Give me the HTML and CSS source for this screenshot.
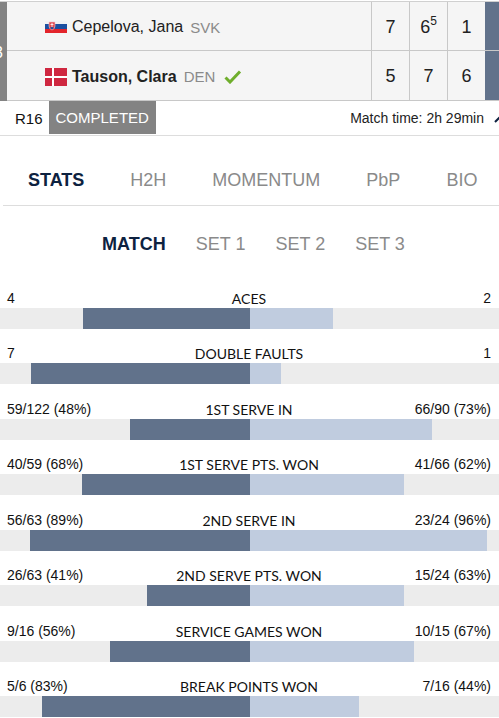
FILE: index.html
```html
<!DOCTYPE html>
<html lang="en">
<head>
    <meta charset="UTF-8">
    <meta name="viewport" content="width=device-width, initial-scale=1.0">
    <title>Cepelova vs Tauson - Match Stats</title>
    <link rel="stylesheet" href="styles.css">
</head>
<body>
    <header class="scoreboard">
        <div class="match-no"><span>3</span></div>
        <table class="score-table">
            <tr>
                <td class="player">
                    <div class="player-info">
                        <svg class="flag" viewBox="0 0 22 18" aria-hidden="true">
                            <rect y="3" width="22" height="4" fill="#f1f1f4"/>
                            <rect y="6" width="22" height="5" fill="#1c4fa0"/>
                            <rect y="11" width="22" height="4" fill="#e3242b"/>
                            <path d="M4 4h6v4q0 3-3 4-3-1-3-4z" fill="#e0474f" stroke="#f3c8cc" stroke-width=".6"/>
                            <path d="M7 5v4M5.5 6.5h3" stroke="#fff" stroke-width=".8"/>
                            <path d="M5 10q2-2 4 0l-2 1.5z" fill="#1c4fa0"/>
                        </svg>
                        <span class="name">Cepelova, Jana</span>
                        <span class="country">SVK</span>
                    </div>
                </td>
                <td class="set">7</td>
                <td class="set">6<sup>5</sup></td>
                <td class="set">1</td>
                <td class="points"></td>
            </tr>
            <tr class="winner">
                <td class="player">
                    <div class="player-info">
                        <svg class="flag" viewBox="0 0 22 18" aria-hidden="true">
                            <rect width="22" height="18" fill="#cf2740"/>
                            <path d="M8 0v18M0 9h22" stroke="#fff" stroke-width="2"/>
                        </svg>
                        <span class="name">Tauson, Clara</span>
                        <span class="country">DEN</span>
                        <svg class="check" viewBox="0 0 18 14" aria-hidden="true">
                            <path d="M1.5 7.5L6 12L16 1.5" fill="none" stroke="#6fae2c" stroke-width="3"/>
                        </svg>
                    </div>
                </td>
                <td class="set">5</td>
                <td class="set">7</td>
                <td class="set">6</td>
                <td class="points"></td>
            </tr>
        </table>
    </header>

    <div class="match-info">
        <span class="round">R16</span>
        <span class="state">COMPLETED</span>
        <span class="time">Match time: 2h 29min</span>
        <button class="toggle" aria-label="Collapse">
            <svg viewBox="0 0 16 10" aria-hidden="true">
                <path d="M1 9L8 2L15 9" fill="none" stroke="#0d2240" stroke-width="2"/>
            </svg>
        </button>
    </div>

    <nav class="tabs">
        <button class="active">STATS</button>
        <button>H2H</button>
        <button>MOMENTUM</button>
        <button>PbP</button>
        <button>BIO</button>
    </nav>
    <nav class="set-tabs">
        <button class="active">MATCH</button>
        <button>SET 1</button>
        <button>SET 2</button>
        <button>SET 3</button>
    </nav>

    <main class="stats">
        <section class="stat">
            <div class="labels"><span>4</span><h2>ACES</h2><span>2</span></div>
            <div class="bars">
                <div class="bar left"><div class="fill" style="width: 66.67%"></div></div>
                <div class="bar right"><div class="fill" style="width: 33.33%"></div></div>
            </div>
        </section>
        <section class="stat">
            <div class="labels"><span>7</span><h2>DOUBLE FAULTS</h2><span>1</span></div>
            <div class="bars">
                <div class="bar left"><div class="fill" style="width: 87.5%"></div></div>
                <div class="bar right"><div class="fill" style="width: 12.5%"></div></div>
            </div>
        </section>
        <section class="stat">
            <div class="labels"><span>59/122 (48%)</span><h2>1ST SERVE IN</h2><span>66/90 (73%)</span></div>
            <div class="bars">
                <div class="bar left"><div class="fill" style="width: 48%"></div></div>
                <div class="bar right"><div class="fill" style="width: 73%"></div></div>
            </div>
        </section>
        <section class="stat">
            <div class="labels"><span>40/59 (68%)</span><h2>1ST SERVE PTS. WON</h2><span>41/66 (62%)</span></div>
            <div class="bars">
                <div class="bar left"><div class="fill" style="width: 67%"></div></div>
                <div class="bar right"><div class="fill" style="width: 62%"></div></div>
            </div>
        </section>
        <section class="stat">
            <div class="labels"><span>56/63 (89%)</span><h2>2ND SERVE IN</h2><span>23/24 (96%)</span></div>
            <div class="bars">
                <div class="bar left"><div class="fill" style="width: 88%"></div></div>
                <div class="bar right"><div class="fill" style="width: 95%"></div></div>
            </div>
        </section>
        <section class="stat">
            <div class="labels"><span>26/63 (41%)</span><h2>2ND SERVE PTS. WON</h2><span>15/24 (63%)</span></div>
            <div class="bars">
                <div class="bar left"><div class="fill" style="width: 41%"></div></div>
                <div class="bar right"><div class="fill" style="width: 62%"></div></div>
            </div>
        </section>
        <section class="stat">
            <div class="labels"><span>9/16 (56%)</span><h2>SERVICE GAMES WON</h2><span>10/15 (67%)</span></div>
            <div class="bars">
                <div class="bar left"><div class="fill" style="width: 56%"></div></div>
                <div class="bar right"><div class="fill" style="width: 66%"></div></div>
            </div>
        </section>
        <section class="stat">
            <div class="labels"><span>5/6 (83%)</span><h2>BREAK POINTS WON</h2><span>7/16 (44%)</span></div>
            <div class="bars">
                <div class="bar left"><div class="fill" style="width: 83%"></div></div>
                <div class="bar right"><div class="fill" style="width: 44%"></div></div>
            </div>
        </section>
    </main>
</body>
</html>
```
FILE: styles.css
```css
* {
    box-sizing: border-box;
}
body {
    font-family: Arial, "Liberation Sans", sans-serif;
    margin: 0;
    background-color: #ffffff;
    color: #111111;
    overflow-x: hidden;
}
button {
    font-family: inherit;
    background: none;
    border: none;
    padding: 0;
    cursor: pointer;
}

/* scoreboard */
.scoreboard {
    display: flex;
    margin-top: 1px;
    border-top: 1px solid #d0d0d0;
    background-color: #f5f5f5;
}
.match-no {
    display: flex;
    align-items: center;
    justify-content: flex-end;
    width: 7px;
    padding: 2px 4px 0 0;
    background-color: #838383;
    color: #ffffff;
    font-size: 16px;
    overflow: hidden;
}
.score-table {
    flex: 1;
    border-collapse: separate;
    border-spacing: 0;
    table-layout: fixed;
}
.score-table td {
    height: 49px;
    padding: 2px 0 0;
    border-bottom: 1px solid #c8c8c8;
}
.score-table .winner td {
    height: 50px;
}
.player-info {
    display: flex;
    align-items: center;
    padding-left: 38px;
}
.flag {
    width: 22px;
    height: 18px;
    margin-right: 5px;
}
.name {
    font-size: 16px;
    color: #222222;
}
.winner .name {
    font-weight: bold;
}
.country {
    margin-left: 7px;
    font-size: 15px;
    color: #8a8a8a;
}
.check {
    width: 18px;
    height: 14px;
    margin-left: 9px;
}
.score-table .set {
    width: 38px;
    border-left: 1px solid #c8c8c8;
    text-align: center;
    font-size: 18px;
    color: #222222;
}
.set sup {
    font-size: 12px;
    line-height: 0;
    vertical-align: 8px;
}
.score-table .points {
    width: 14px;
    background-color: #61728b;
}

/* match info */
.match-info {
    display: flex;
    align-items: center;
    height: 35px;
    padding-left: 15px;
    border-bottom: 1px solid #dddddd;
    font-size: 15px;
    overflow: hidden;
}
.state {
    align-self: flex-start;
    margin-left: 6px;
    padding: 0 7px;
    line-height: 33px;
    background-color: #838383;
    color: #ffffff;
}
.time {
    margin-left: auto;
    font-size: 14px;
    color: #222222;
}
.toggle {
    width: 5px;
    margin-left: 10px;
    overflow: visible;
}
.toggle svg {
    display: block;
    width: 16px;
    height: 10px;
}

/* tabs */
.tabs,
.set-tabs {
    display: flex;
    align-items: center;
}
.tabs button,
.set-tabs button {
    font-size: 18px;
    color: #8a8a8a;
}
.tabs .active,
.set-tabs .active {
    font-weight: bold;
    color: #0d2240;
}
.tabs {
    gap: 46px;
    height: 70px;
    margin-left: 3px;
    padding: 20px 0 0 25px;
    border-bottom: 1px solid #dddddd;
}
.set-tabs {
    justify-content: center;
    gap: 30px;
    height: 67px;
    padding: 10px 0 0 8px;
}

/* stats */
.stat {
    padding-top: 7px;
}
.stat:nth-child(odd) {
    padding-top: 8px;
}
.labels {
    display: grid;
    grid-template-columns: 1fr auto 1fr;
    padding: 8px 8px 0 7px;
    line-height: 19px;
    font-size: 14px;
}
.labels span:last-child {
    text-align: right;
}
.labels h2 {
    margin: 0;
    font-family: Lato, sans-serif;
    font-size: 14px;
    font-weight: normal;
}
.bars {
    display: flex;
}
.bar {
    flex: 1;
    display: flex;
    height: 21px;
    background-color: #ececec;
}
.left {
    justify-content: flex-end;
}
.left .fill {
    background-color: #61728b;
}
.right .fill {
    background-color: #c0ccdf;
}
```
